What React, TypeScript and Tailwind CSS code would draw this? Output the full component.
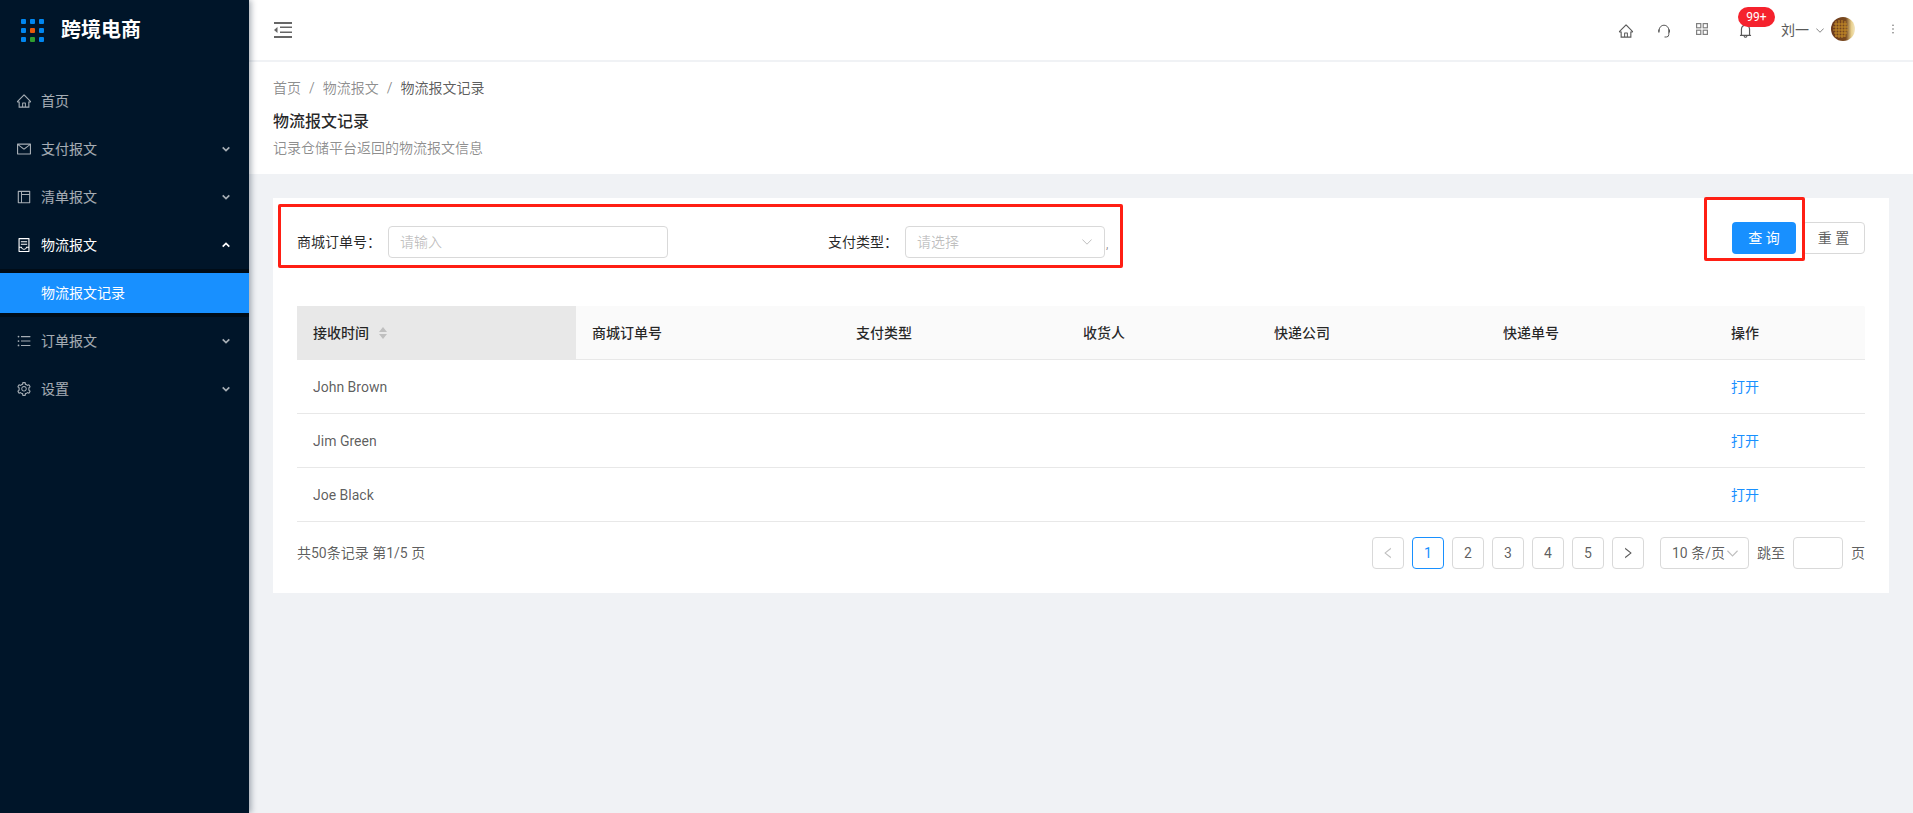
import React from "react";
import {
  AiOutlineHome, AiOutlineMail, AiOutlineLayout, AiOutlineContainer, AiOutlineUnorderedList, AiOutlineSetting,
  AiOutlineBell, AiOutlineMore, AiOutlineLeft, AiOutlineRight,
} from "react-icons/ai";

const FONT = "font-['Roboto','Noto_Sans_CJK_SC',sans-serif]";

function Chevron({ up }: { up?: boolean }) {
  return (
    <svg width="8" height="6" viewBox="0 0 8 6" className="shrink-0">
      <polyline points={up ? "0.7,4.6 4,1.4 7.3,4.6" : "0.7,1.4 4,4.6 7.3,1.4"} fill="none" stroke="currentColor" strokeWidth="1.7" />
    </svg>
  );
}

function ThinDown({ w = 10, color = "#bfbfbf" }: { w?: number; color?: string }) {
  return (
    <svg width={w} height={Math.round(w * 0.6)} viewBox="0 0 10 6" className="shrink-0">
      <polyline points="0.4,0.5 5,5.2 9.6,0.5" fill="none" stroke={color} strokeWidth="1" />
    </svg>
  );
}

function MenuItem({ icon, label, open, arrow = true }: { icon: React.ReactNode; label: string; open?: boolean; arrow?: boolean }) {
  return (
    <div className={`flex h-10 items-center pl-[16px] pr-[19px] text-sm ${open ? "text-white" : "text-white/65"}`}>
      <span className="mr-[9px] w-[16px] text-base">{icon}</span>
      <span className="flex-1">{label}</span>
      {arrow && <Chevron up={open} />}
    </div>
  );
}

function Sidebar() {
  return (
    <aside className="relative z-10 flex w-[249px] shrink-0 flex-col bg-[#001529] shadow-[2px_0_6px_rgba(0,21,41,0.35)]">
      <div className="flex h-[60px] items-center pl-[21px]">
        <div className="grid grid-cols-3 gap-x-[4px] gap-y-[4px]">
          {["#0086f0", "#0086f0", "#0086f0", "#0086f0", "#e8590c", "#0086f0", "#0086f0", "#2f9e2f", "#0086f0"].map((c, i) => (
            <svg key={i} width="5" height="5" viewBox="0 0 5 5" className="block"><rect width="5" height="5" rx="1" fill={c} /></svg>
          ))}
        </div>
        <span className="ml-[17px] text-[20px] font-bold text-white">跨境电商</span>
      </div>
      <nav className="mt-[21px] flex flex-col">
        <div className="flex flex-col gap-2">
          <MenuItem icon={<AiOutlineHome />} label="首页" arrow={false} />
          <MenuItem icon={<AiOutlineMail />} label="支付报文" />
          <MenuItem icon={<AiOutlineLayout />} label="清单报文" />
          <MenuItem icon={<AiOutlineContainer />} label="物流报文" open />
        </div>
        <div className="mt-1 bg-[#000c17] py-1">
          <div className="flex h-10 items-center bg-[#1890ff] pl-[41px] text-sm text-white">物流报文记录</div>
        </div>
        <div className="mt-1 flex flex-col gap-2">
          <MenuItem icon={<AiOutlineUnorderedList />} label="订单报文" />
          <MenuItem icon={<AiOutlineSetting />} label="设置" />
        </div>
      </nav>
    </aside>
  );
}

function Avatar() {
  return (
    <svg width="24" height="24" viewBox="0 0 24 24" className="shrink-0">
      <defs>
        <linearGradient id="av" x1="0" x2="1" y1="0" y2="0">
          <stop offset="0" stopColor="#6b3a1e" />
          <stop offset="0.62" stopColor="#7a4a1e" />
          <stop offset="0.85" stopColor="#e7cf8d" />
          <stop offset="1" stopColor="#f4e7c3" />
        </linearGradient>
      </defs>
      <circle cx="12" cy="12" r="12" fill="url(#av)" />
      <g stroke="#d49a2a" strokeWidth="1" opacity="0.85">
        <path d="M3 7H16M2 10H17M2 13H17M3 16H16M4 19H14" />
        <path d="M5 4V20M8 3V21M11 3V21M14 4V20" />
      </g>
    </svg>
  );
}

function CollapseIcon() {
  return (
    <svg width="18" height="16" viewBox="0 0 18 16" className="shrink-0">
      <rect x="0" y="0" width="18" height="2" fill="#666" />
      <rect x="0" y="14" width="18" height="2" fill="#666" />
      <rect x="6" y="4.5" width="12" height="1.5" fill="#666" />
      <rect x="6" y="9.5" width="12" height="1.5" fill="#666" />
      <path d="M0 8L3.5 5V11Z" fill="#666" />
    </svg>
  );
}

function HeadsetIcon() {
  return (
    <svg width="14" height="14" viewBox="0 0 14 14" fill="none" stroke="#595959" strokeWidth="1" className="mt-[2px] shrink-0">
      <path d="M2.2 7.5V6a4.8 4.8 0 0 1 9.6 0v4.5a2.5 2.5 0 0 1-2.5 2.5H7.5" />
      <path d="M2.2 5.6H1.2V8.4H2.6Z" fill="#595959" stroke="none" />
      <path d="M11.8 5.6H13V8.4H11.8Z" fill="#595959" stroke="none" />
    </svg>
  );
}

function AppsIcon() {
  return (
    <svg width="12" height="12" viewBox="0 0 12 12" fill="none" stroke="#808080" strokeWidth="1.2" className="shrink-0">
      <rect x="0.6" y="0.6" width="4.2" height="4.2" />
      <rect x="7.2" y="0.6" width="4.2" height="4.2" />
      <rect x="0.6" y="7.2" width="4.2" height="4.2" />
      <rect x="7.2" y="7.2" width="4.2" height="4.2" />
    </svg>
  );
}

function Header() {
  return (
    <header className="relative z-[1] flex h-[60px] shrink-0 items-center bg-white pl-[25px] pr-[13px]">
      <CollapseIcon />
      <div className="ml-auto flex items-center text-[#595959]">
        <AiOutlineHome className="mt-[2px] text-base" />
        <span className="ml-[23px] flex"><HeadsetIcon /></span>
        <span className="ml-[25px] -mt-[2px] flex"><AppsIcon /></span>
        <span className="relative ml-[29px] mt-[1px] flex">
          <AiOutlineBell className="text-[17px]" />
          <span className="absolute -top-[15px] left-[1px] flex h-5 w-[37px] items-center justify-center rounded-[10px] bg-[#f5222d] text-xs text-white">99+</span>
        </span>
        <span className="ml-[27px] text-sm">刘一</span>
        <span className="ml-[7px] flex"><ThinDown w={8} color="#666" /></span>
        <span className="ml-[7px] -mt-[2px] flex"><Avatar /></span>
        <AiOutlineMore className="ml-[31px] -mt-[2px] text-[14px] text-[#666]" />
      </div>
    </header>
  );
}

const COLS = "grid grid-cols-[279px_264px_227px_191px_229px_228px_150px]";
const HEAD = ["商城订单号", "支付类型", "收货人", "快递公司", "快递单号", "操作"];
const ROWS = ["John Brown", "Jim Green", "Joe Black"];

function SortIcon() {
  return (
    <svg width="8" height="12" viewBox="0 0 8 12" className="ml-[10px]">
      <path d="M4 0L8 5H0Z M0 7H8L4 12Z" fill="#bfbfbf" />
    </svg>
  );
}

function Table() {
  return (
    <div className="mt-[48px]">
      <div className={`${COLS} h-[54px] rounded-t-[2px] border-b border-[#e8e8e8] bg-[#fafafa] text-sm font-medium text-black/85`}>
        <div className="flex items-center bg-[#e8e8e8] pl-4">接收时间<SortIcon /></div>
        {HEAD.map((h) => <div key={h} className="flex items-center pl-4">{h}</div>)}
      </div>
      {ROWS.map((r) => (
        <div key={r} className={`${COLS} h-[54px] border-b border-[#e8e8e8] text-sm text-black/65`}>
          <div className="flex items-center pl-4">{r}</div>
          <div /><div /><div /><div /><div />
          <div className="flex items-center pl-4 text-[#1890ff]">打开</div>
        </div>
      ))}
    </div>
  );
}

function PageBtn({ children, active, muted }: { children: React.ReactNode; active?: boolean; muted?: boolean }) {
  return (
    <span className={`flex h-8 w-8 items-center justify-center rounded border bg-white text-sm ${active ? "border-[#1890ff] text-[#1890ff]" : "border-[#d9d9d9]"} ${muted ? "text-black/25" : active ? "" : "text-black/65"}`}>
      {children}
    </span>
  );
}

function Pagination() {
  return (
    <div className="mt-[15px] flex h-8 items-center text-sm text-black/65">
      <span>共50条记录 第1/5 页</span>
      <div className="ml-auto flex items-center gap-2">
        <PageBtn muted><AiOutlineLeft className="text-[14px]" /></PageBtn>
        <PageBtn active>1</PageBtn>
        <PageBtn>2</PageBtn>
        <PageBtn>3</PageBtn>
        <PageBtn>4</PageBtn>
        <PageBtn>5</PageBtn>
        <PageBtn><AiOutlineRight className="text-[14px]" /></PageBtn>
      </div>
      <span className="ml-4 flex h-8 w-[89px] items-center justify-between rounded border border-[#d9d9d9] pl-[11px] pr-[10px]">
        10 条/页<ThinDown w={11} />
      </span>
      <span className="ml-2">跳至</span>
      <span className="ml-2 h-8 w-[50px] rounded border border-[#d9d9d9]" />
      <span className="ml-2">页</span>
    </div>
  );
}

function Filter() {
  return (
    <div className="flex items-start">
      <div className="mt-[28px] flex items-center text-sm text-black/85">
        <span className="w-[91px]">商城订单号：</span>
        <div className="flex h-8 w-[280px] items-center rounded border border-[#d9d9d9] bg-white px-[11px] text-black/25">请输入</div>
        <span className="ml-[160px]">支付类型：</span>
        <div className="ml-[7px] flex h-8 w-[200px] items-center justify-between rounded border border-[#d9d9d9] bg-white pl-[11px] pr-[12px] text-black/25">
          请选择<ThinDown />
        </div>
        <span className="ml-[1px] mt-[3px] text-xs text-black/45">,</span>
      </div>
      <div className="ml-auto mt-6 flex items-center gap-[6px] text-sm">
        <span className="flex h-8 w-16 items-center justify-center rounded bg-[#1890ff] text-white">查 询</span>
        <span className="flex h-8 w-[63px] items-center justify-center rounded border border-[#d9d9d9] bg-white text-black/65">重 置</span>
      </div>
    </div>
  );
}

export default function App() {
  return (
    <div className={`${FONT} relative flex h-[813px] w-full overflow-hidden bg-[#f0f2f5]`}>
      <Sidebar />
      <main className="flex min-w-0 flex-1 flex-col">
        <Header />
        <section className="mt-[2px] h-[112px] bg-white pl-6 pt-[16px]">
          <div className="flex text-sm leading-5 text-black/45">
            <span>首页</span><span className="mx-[8px]">/</span><span>物流报文</span><span className="mx-[8px]">/</span><span className="text-black/65">物流报文记录</span>
          </div>
          <div className="mt-[12px] text-base font-medium leading-6 text-black/85">物流报文记录</div>
          <div className="mt-[3px] text-sm leading-[22px] text-black/45">记录仓储平台返回的物流报文信息</div>
        </section>
        <section className="mx-6 mt-6 h-[395px] bg-white px-6">
          <Filter />
          <Table />
          <Pagination />
        </section>
      </main>
      <div className="pointer-events-none absolute left-[278px] top-[204px] h-[64px] w-[845px] rounded-[2px] border-[3px] border-[#ff1f14]" />
      <div className="pointer-events-none absolute left-[1704px] top-[197px] h-[64px] w-[101px] rounded-[2px] border-[3px] border-[#ff1f14]" />
    </div>
  );
}
